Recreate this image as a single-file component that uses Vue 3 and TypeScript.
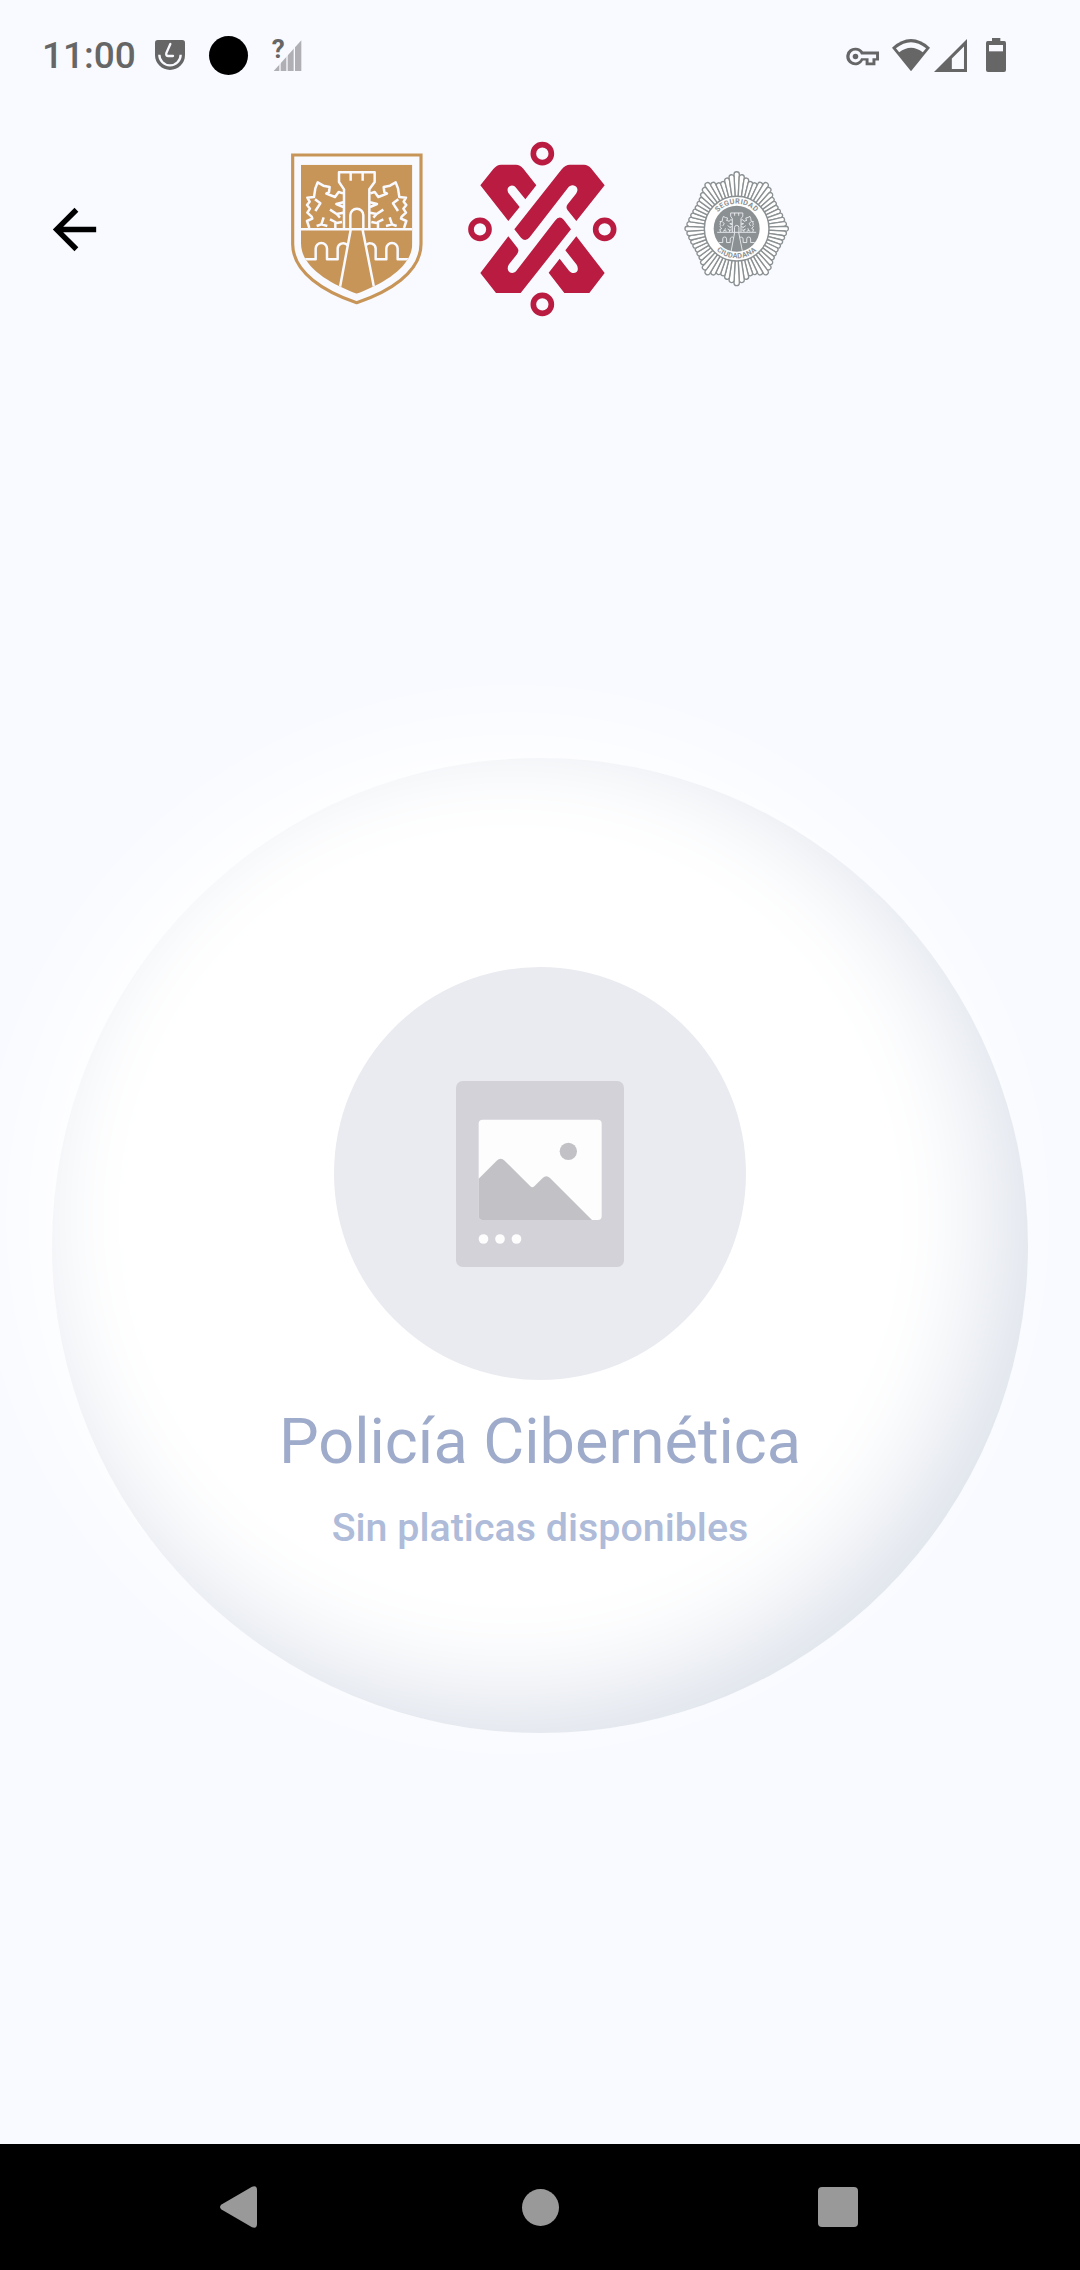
<script setup lang="ts">
interface Petal {
  d: string
}

const title = 'Policía Cibernética'
const subtitle = 'Sin platicas disponibles'

// Radius of the badge outline at each of the 17 steps of one quadrant.
const quadrant = [170, 163, 155, 148, 149, 157, 165, 158, 150, 144, 142, 141, 142, 144, 147, 150, 155]
const count = 64
const step = (Math.PI * 2) / count

const petals: Petal[] = Array.from({ length: count }, (_, i) => {
  const folded = i % 32
  const radius = quadrant[folded > 16 ? 32 - folded : folded] - 7
  const angle = i * step
  const at = (r: number, a: number): string =>
    `${(200 + r * Math.sin(a)).toFixed(1)} ${(206 - r * Math.cos(a)).toFixed(1)}`
  const half = step / 2
  const cap = (radius * step * 0.5).toFixed(1)
  return {
    d: `M${at(92, angle - half)}L${at(radius, angle - half)}A${cap} ${cap} 0 0 1 ${at(radius, angle + half)}L${at(92, angle + half)}Z`
  }
})

const lion =
  'M88 264L81 243L97 236L95 230L82 218L90 206L81 195L89 185L82 173L102 171L106 145L113 127L130 137L149 141L147 156L139 161L165 171L176 156L189 160M105 178L121 190L106 213M190 187L169 192L190 201M150 209L170 222L190 218M170 222L180 233M166 264V246L150 238M166 250L186 246M110 258L124 253L131 232M124 253L142 258'
const bridge = 'M70 358H107V326A17 17 0 0 1 141 326V358H173V328A17 17 0 0 1 203 316'
const tower =
  'M192 266V148L177 126V97H284V126L268 148V266M212 97V122M248 97V122M211 266V226A19.500 19.500 0 0 1 250 226V266M58 268H402M212 270L178 452M248 270L284 452'
</script>

<template>
  <div class="screen">
    <div class="status">
      <span class="clock">11:00</span>
      <svg class="guard" viewBox="0 0 90 90">
        <path d="M8 0H82Q90 0 90 8V45A45 45 0 0 1 0 45V8Q0 0 8 0Z" fill="#666" />
        <path d="M13 44A32 32 0 0 0 77 44" fill="none" stroke="#f8faff" stroke-width="7" />
        <path d="M46 12L34 39Q32 48 40 48H54" fill="none" stroke="#f8faff" stroke-width="7" stroke-linecap="round" />
      </svg>
      <span class="dot"></span>
      <svg class="nosim" viewBox="-9 -21 108 144">
        <path d="M5 99L88 7V99Z" fill="#b0b0b4" />
        <path d="M24 70V102M45 48V102M67 26V102" stroke="#f8faff" stroke-width="4" />
        <text x="-1" y="59" font-size="78" font-weight="700" fill="#666">?</text>
      </svg>
      <svg class="key" viewBox="0 0 104 62">
        <path
          d="M29 4A27 27 0 1 0 52 43H60V58H90V43H101V16H52A27 27 0 0 0 29 4Z"
          fill="#666"
        />
        <path d="M29 13A18 18 0 1 0 46 36H69V49H81V36H92V25H46A18 18 0 0 0 29 13Z" fill="#f8faff" />
        <circle cx="29" cy="31" r="8.500" fill="#666" />
      </svg>
      <svg class="wifi" viewBox="0 0 116 100">
        <path d="M0 26Q58 -26 116 26L58 98Z" fill="#666" />
        <path d="M12 28Q58 -9 104 28L94 40Q58 12 22 40Z" fill="#f8faff" />
      </svg>
      <svg class="cell" viewBox="0 0 98 98">
        <path d="M98 0V98H0Z" fill="#666" />
        <path d="M89 22V89H53V58Z" fill="#f8faff" />
      </svg>
      <svg class="battery" viewBox="0 0 60 102">
        <path d="M18 0H43V9H55Q60 9 60 15V96Q60 102 54 102H6Q0 102 0 96V15Q0 9 5 9H18Z" fill="#666" />
        <path d="M9 21H51V40H9Z" fill="#f8faff" />
      </svg>
    </div>

    <header class="header">
      <svg class="back" viewBox="0 0 24 24">
        <path d="M20 11H7.830l5.590-5.590L12 4l-8 8 8 8 1.410-1.410L7.830 13H20v-2z" />
      </svg>

      <svg class="shield" viewBox="0 0 480 525">
        <defs>
          <clipPath id="field">
            <path d="M63 74H397V310C397 378 318 428 230 461C142 428 63 378 63 310Z" />
          </clipPath>
        </defs>
        <path
          d="M38 45H423V312C423 398 324 457 230 488C136 457 38 398 38 312Z"
          fill="none"
          stroke="#c89559"
          stroke-width="9.500"
        />
        <g clip-path="url(#field)">
          <rect x="60" y="70" width="340" height="400" fill="#c89559" />
          <g class="lines">
            <path :d="tower" />
            <path :d="lion" />
            <path :d="lion" transform="matrix(-1 0 0 1 460 0)" />
            <path :d="bridge" />
            <path :d="bridge" transform="matrix(-1 0 0 1 460 0)" />
          </g>
        </g>
      </svg>

      <svg class="cdmx" viewBox="0 0 525 585">
        <g fill="none" stroke="#b91c40" stroke-width="17">
          <circle cx="262" cy="71" r="27" />
          <circle cx="75" cy="298" r="27" />
          <circle cx="449" cy="298" r="27" />
          <circle cx="262" cy="523" r="27" />
        </g>
        <g fill="#b91c40">
          <path
            d="M76 166L115 117Q126 104 138 104H183Q195 104 205 116L244 166L211 208L183 173C174 160 155 168 158 182Q158 187 162 191L194 231L160 273Z"
          />
          <path
            d="M178 298L319 119Q331 104 345 104H387Q399 104 408 115L449 166L364 273L338 241Q331 232 338 223L363 191C376 175 358 160 345 168Q341 170 339 173L224 322Q211 338 198 323Z"
          />
          <path
            d="M160 319L187 353Q194 362 186 373L162 403C150 420 168 438 183 424L300 272Q313 255 326 269L348 298L197 489H123L76 429Z"
          />
          <path
            d="M364 319L449 429L403 489H328L281 428L314 386L342 422C353 435 372 428 368 413Q368 408 364 403L331 361Z"
          />
        </g>
      </svg>

      <svg class="badge" viewBox="0 0 390 405">
        <defs>
          <clipPath id="disc"><circle cx="200" cy="206" r="69" /></clipPath>
          <path id="arc-top" d="M125 206A75 75 0 0 1 275 206" />
          <path id="arc-bottom" d="M111 206A89 89 0 0 0 289 206" />
        </defs>
        <g fill="#fff" stroke="#8b9092" stroke-width="4">
          <path v-for="(petal, i) in petals" :key="i" :d="petal.d" />
        </g>
        <circle cx="200" cy="206" r="97" fill="#fff" stroke="#8b9092" stroke-width="4.500" />
        <circle cx="200" cy="206" r="69" fill="#8b9092" />
        <g clip-path="url(#disc)">
          <g class="lines fine" transform="translate(121.800 125.900) scale(.34)">
            <path :d="tower" />
            <path :d="lion" />
            <path :d="lion" transform="matrix(-1 0 0 1 460 0)" />
            <path :d="bridge" />
            <path :d="bridge" transform="matrix(-1 0 0 1 460 0)" />
          </g>
        </g>
        <text class="motto">
          <textPath href="#arc-top" startOffset="50%">SEGURIDAD</textPath>
        </text>
        <text class="motto">
          <textPath href="#arc-bottom" startOffset="50%">CIUDADANA</textPath>
        </text>
      </svg>
    </header>

    <main class="content">
      <section class="card">
        <div class="avatar">
          <svg class="picture" viewBox="408 393 504 558">
            <rect x="408" y="393" width="504" height="558" rx="20" fill="#d3d2d8" />
            <rect x="476" y="509" width="369" height="301" rx="12" fill="#fdfdfd" />
            <path
              d="M476 686L530 632Q542 620 554 632L631 709Q637 715 643 709L668 684Q679 673 690 684L816 810H488Q476 810 476 798Z"
              fill="#c2c1c6"
            />
            <circle cx="745" cy="604" r="26" fill="#c2c1c6" />
            <g fill="#fdfdfd">
              <circle cx="490.500" cy="867" r="14.500" />
              <circle cx="540" cy="867" r="14.500" />
              <circle cx="589.500" cy="867" r="14.500" />
            </g>
          </svg>
        </div>
        <h1 class="title">{{ title }}</h1>
        <p class="subtitle">{{ subtitle }}</p>
      </section>
    </main>

    <nav class="nav">
      <svg class="nav-back" viewBox="0 0 37 42">
        <path d="M1.500 18.500L32 .8Q37 -1 37 4V38Q37 43 32 41.200L1.500 23.500Q-1.500 21 1.500 18.500Z" />
      </svg>
      <span class="nav-home"></span>
      <span class="nav-recent"></span>
    </nav>
  </div>
</template>

<style>
body {
  margin: 0;
  background: #f8faff;
}
</style>

<style scoped>
.screen {
  display: flex;
  flex-direction: column;
  width: 1080px;
  height: 2270px;
  overflow: hidden;
  background: #f8faff;
  font-family: Roboto, "Liberation Sans", sans-serif;
}
svg {
  display: block;
  flex: none;
}
.status {
  display: flex;
  align-items: center;
  box-sizing: border-box;
  height: 110px;
  padding-left: 42px;
}
.clock {
  width: 113px;
  font-size: 37px;
  font-weight: 500;
  line-height: 44px;
  color: #666;
  margin-top: 2px;
}
.guard {
  width: 30px;
  height: 30px;
}
.dot {
  width: 39px;
  height: 39px;
  margin: 0 21px 0 24px;
  border-radius: 50%;
  background: #000;
}
.nosim {
  width: 36px;
  height: 48px;
}
.key {
  width: 34px;
  height: 21px;
  margin: 2px 12px 0 541px;
}
.wifi {
  width: 38px;
  height: 33px;
}
.cell {
  width: 33px;
  height: 33px;
  margin-left: 4px;
}
.battery {
  width: 20px;
  height: 34px;
  margin-left: 19px;
}
.header {
  display: flex;
  align-items: center;
  height: 238px;
  padding-left: 42px;
}
.back {
  width: 65px;
  height: 65px;
  fill: #000;
}
.shield {
  width: 160px;
  height: 175px;
  margin-left: 173px;
  margin-top: -3px;
}
.cdmx {
  width: 175px;
  height: 195px;
  margin-left: 15px;
  margin-top: -3px;
}
.badge {
  width: 130px;
  height: 135px;
  margin-left: 40px;
  margin-top: -3px;
}
.lines {
  fill: none;
  stroke: #f8faff;
  stroke-width: 7.5;
  stroke-linejoin: round;
}
.fine {
  stroke-width: 7;
}
.motto {
  font-size: 22px;
  font-weight: 700;
  letter-spacing: 1px;
  text-anchor: middle;
  fill: #8b9092;
}
.content {
  flex: 1;
  display: flex;
  flex-direction: column;
  align-items: center;
  padding-top: 410px;
}
.card {
  display: flex;
  flex-direction: column;
  align-items: center;
  box-sizing: border-box;
  width: 976px;
  height: 975px;
  padding-top: 209px;
  border-radius: 50%;
  background: #fff;
  box-shadow:
    -26px -26px 105px #fff,
    inset -29px -29px 105px #dce1ea;
}
.avatar {
  display: flex;
  align-items: center;
  justify-content: center;
  width: 412px;
  height: 413px;
  border-radius: 50%;
  background: #eaebf0;
}
.picture {
  width: 168px;
  height: 186px;
}
.title {
  margin: 25px 0 0;
  font-size: 63px;
  font-weight: 400;
  line-height: 74px;
  color: #9fabca;
}
.subtitle {
  margin: 26px 0 0;
  font-size: 39.4px;
  font-weight: 500;
  line-height: 46px;
  color: #aebbd9;
}
.nav {
  display: flex;
  align-items: center;
  height: 126px;
  padding-left: 220px;
  background: #000;
}
.nav-back {
  width: 37px;
  height: 42px;
  fill: #999;
}
.nav-home {
  width: 37px;
  height: 37px;
  margin: 0 259.5px 0 264.500px;
  border-radius: 50%;
  background: #999;
}
.nav-recent {
  width: 40px;
  height: 40px;
  border-radius: 4px;
  background: #999;
}
</style>
